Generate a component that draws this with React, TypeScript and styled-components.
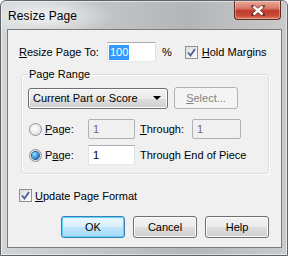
import React from "react";
import styled, { createGlobalStyle } from "styled-components";

const GlobalStyle = createGlobalStyle`
  html, body {
    margin: 0;
    padding: 0;
    background: #ffffff;
  }
  body {
    font-family: "Liberation Sans", Arial, sans-serif;
    font-size: 11px;
    color: #000;
  }
`;

const Window = styled.div`
  width: 288px;
  height: 256px;
  box-sizing: border-box;
  border: 1px solid #5f6266;
  border-radius: 6px 6px 0 0;
  padding: 0 5px 7px 6px;
  display: flex;
  flex-direction: column;
  background:
    radial-gradient(ellipse 70px 20px at 42px 15px, rgba(255, 255, 255, 0.75), rgba(255, 255, 255, 0) 100%),
    linear-gradient(to right, #d2d4d6 0%, #bdbfc1 45%, #b3b5b7 65%, #c8cacc 100%);
  box-shadow: inset 0 0 0 1px rgba(255, 255, 255, 0.55);
`;

const TitleBar = styled.div`
  height: 28px;
  display: flex;
  align-items: flex-start;
  justify-content: space-between;
`;

const Title = styled.span`
  font-family: "Liberation Sans", Arial, sans-serif;
  font-size: 12px;
  color: #000;
  margin-top: 8px;
  margin-left: 1px;
  letter-spacing: 0.1px;
`;

const CloseButton = styled.div`
  width: 47px;
  height: 19px;
  margin-right: 1px;
  box-sizing: border-box;
  border: 1px solid #5d2a24;
  border-top: none;
  border-radius: 0 0 4px 4px;
  display: flex;
  align-items: center;
  justify-content: center;
  background: linear-gradient(to bottom, #e9a99a 0%, #d8796a 40%, #c0392b 55%, #c84a36 80%, #e07a5c 100%);
  box-shadow: inset 0 0 0 1px rgba(255, 255, 255, 0.35);
`;

const Client = styled.div`
  flex: 1;
  border: 1px solid #7a7d80;
  background: #f0f0f0;
  padding: 12px 12px 0 11px;
  display: flex;
  flex-direction: column;
`;

const Row = styled.div<{ $gap?: number; $top?: number }>`
  display: flex;
  align-items: center;
  gap: ${(p) => p.$gap ?? 0}px;
  margin-top: ${(p) => p.$top ?? 0}px;
`;

const Label = styled.span<{ $width?: number; $disabled?: boolean }>`
  white-space: nowrap;
  width: ${(p) => (p.$width ? `${p.$width}px` : "auto")};
  flex-shrink: 0;
  color: ${(p) => (p.$disabled ? "#8d8d8d" : "#000")};
`;

const U = styled.span`
  text-decoration: underline;
  text-underline-offset: 1px;
`;

const TextBox = styled.div<{ $width: number; $disabled?: boolean }>`
  width: ${(p) => p.$width}px;
  height: 20px;
  box-sizing: border-box;
  border: 1px solid;
  border-color: ${(p) =>
    p.$disabled ? "#adb2b5" : "#abadb3 #dbdfe6 #e3e9ef #e2e3ea"};
  border-radius: ${(p) => (p.$disabled ? "2px" : "0")};
  background: ${(p) => (p.$disabled ? "#f0f0f0" : "#ffffff")};
  color: ${(p) => (p.$disabled ? "#6d6d6d" : "#000")};
  display: flex;
  align-items: center;
  padding-left: 4px;
`;

const Selected = styled.span`
  background: #3399ff;
  color: #fff;
  margin-left: -3px;
  padding: 1px 1px 2px 1px;
`;

const CheckBox = styled.span`
  width: 13px;
  height: 13px;
  box-sizing: border-box;
  border: 1px solid #8e8f8f;
  background: linear-gradient(135deg, #dcdcdc, #ffffff);
  display: inline-flex;
  align-items: center;
  justify-content: center;
  flex-shrink: 0;
`;

const Radio = styled.span<{ $checked?: boolean }>`
  width: 13px;
  height: 13px;
  box-sizing: border-box;
  border-radius: 50%;
  border: 1px solid #8e8f8f;
  background: radial-gradient(circle at 40% 40%, #ffffff, #d6d6d6);
  display: inline-flex;
  align-items: center;
  justify-content: center;
  flex-shrink: 0;
  &::after {
    content: "";
    display: ${(p) => (p.$checked ? "block" : "none")};
    width: 7px;
    height: 7px;
    border-radius: 50%;
    background: radial-gradient(circle at 35% 35%, #9fe3ff 0%, #2a8fd6 55%, #0d4f8f 100%);
    box-shadow: 0 0 0 1px #1d5f97;
  }
`;

const Group = styled.fieldset`
  margin: 6px 0 0 2px;
  width: 248px;
  box-sizing: border-box;
  border: 1px solid #d5dfe5;
  border-radius: 3px;
  padding: 0 6px 8px 6px;
  box-shadow: inset 1px 1px 0 #ffffff, 1px 1px 0 #ffffff;
`;

const Legend = styled.legend`
  padding: 0 1px;
  line-height: 13px;
  margin-left: 0;
`;

const Combo = styled.div`
  width: 140px;
  height: 21px;
  box-sizing: border-box;
  border: 1px solid #707070;
  border-radius: 3px;
  background: linear-gradient(to bottom, #f2f2f2 0%, #ebebeb 50%, #dddddd 51%, #cfcfcf 100%);
  box-shadow: inset 0 0 0 1px #fcfcfc;
  display: flex;
  align-items: center;
  justify-content: space-between;
  padding: 0 6px 0 4px;
  margin-top: 6px;
`;

const Arrow = styled.span`
  width: 0;
  height: 0;
  border-left: 4px solid transparent;
  border-right: 4px solid transparent;
  border-top: 4px solid #000;
`;

const Button = styled.div<{ $default?: boolean; $disabled?: boolean }>`
  width: 64px;
  height: 22px;
  box-sizing: border-box;
  border: 1px solid
    ${(p) => (p.$default ? "#3c7fb1" : p.$disabled ? "#adb2b5" : "#707070")};
  border-radius: 3px;
  display: flex;
  align-items: center;
  justify-content: center;
  color: ${(p) => (p.$disabled ? "#838383" : "#000")};
  background: ${(p) =>
    p.$disabled
      ? "#f4f4f4"
      : p.$default
      ? "linear-gradient(to bottom, #eaf6fd 0%, #d9f0fc 50%, #bee6fd 51%, #a7d9f5 100%)"
      : "linear-gradient(to bottom, #f2f2f2 0%, #ebebeb 50%, #dddddd 51%, #cfcfcf 100%)"};
  box-shadow: ${(p) =>
    p.$disabled
      ? "none"
      : p.$default
      ? "inset 0 0 0 1px #5fd3ff"
      : "inset 0 0 0 1px #fcfcfc"};
`;

const ButtonRow = styled.div`
  display: flex;
  justify-content: flex-end;
  gap: 8px;
  margin-top: 14px;
  padding-right: 0;
`;

const Check = () => (
  <CheckBox>
    <svg width="9" height="9" viewBox="0 0 9 9">
      <path d="M1 4.5 L3.5 7.5 L8 1" fill="none" stroke="#4a5f97" strokeWidth="1.8" />
    </svg>
  </CheckBox>
);

const CloseGlyph = () => (
  <svg width="14" height="11" viewBox="0 0 14 11">
    <path
      d="M2 1 L12 10 M12 1 L2 10"
      stroke="#4a1a14"
      strokeWidth="4"
      strokeLinecap="square"
      opacity="0.6"
    />
    <path d="M2.5 1.5 L11.5 9.5 M11.5 1.5 L2.5 9.5" stroke="#ffffff" strokeWidth="2.4" />
  </svg>
);

export default function App() {
  return (
    <>
      <GlobalStyle />
      <Window>
        <TitleBar>
          <Title>Resize Page</Title>
          <CloseButton>
            <CloseGlyph />
          </CloseButton>
        </TitleBar>
        <Client>
          <Row>
            <Label $width={88}>
              <U>R</U>esize Page To:
            </Label>
            <TextBox $width={49}>
              <Selected>100</Selected>
            </TextBox>
            <Label style={{ marginLeft: 6 }}>%</Label>
            <span style={{ width: 13 }} />
            <Check />
            <Label style={{ marginLeft: 4 }}>
              <U>H</U>old Margins
            </Label>
          </Row>

          <Group>
            <Legend>Page Range</Legend>
            <Row $gap={6}>
              <Combo>
                <span>Current Part or Score</span>
                <Arrow />
              </Combo>
              <Button $disabled style={{ marginTop: 6 }}>
                <span>
                  <U>S</U>elect...
                </span>
              </Button>
            </Row>
            <Row $top={10}>
              <Radio style={{ marginLeft: 1 }} />
              <Label $width={43} style={{ marginLeft: 3 }}>
                <U>P</U>age:
              </Label>
              <TextBox $width={47} $disabled>
                1
              </TextBox>
              <Label $width={52} style={{ marginLeft: 5 }}>
                <U>T</U>hrough:
              </Label>
              <TextBox $width={49} $disabled>
                1
              </TextBox>
            </Row>
            <Row $top={6}>
              <Radio $checked style={{ marginLeft: 1 }} />
              <Label $width={43} style={{ marginLeft: 3 }}>
                P<U>a</U>ge:
              </Label>
              <TextBox $width={47}>1</TextBox>
              <Label style={{ marginLeft: 5 }}>Through End of Piece</Label>
            </Row>
          </Group>

          <Row $top={15} $gap={3}>
            <Check />
            <Label>
              <U>U</U>pdate Page Format
            </Label>
          </Row>

          <ButtonRow>
            <Button $default>OK</Button>
            <Button>Cancel</Button>
            <Button>Help</Button>
          </ButtonRow>
        </Client>
      </Window>
    </>
  );
}
